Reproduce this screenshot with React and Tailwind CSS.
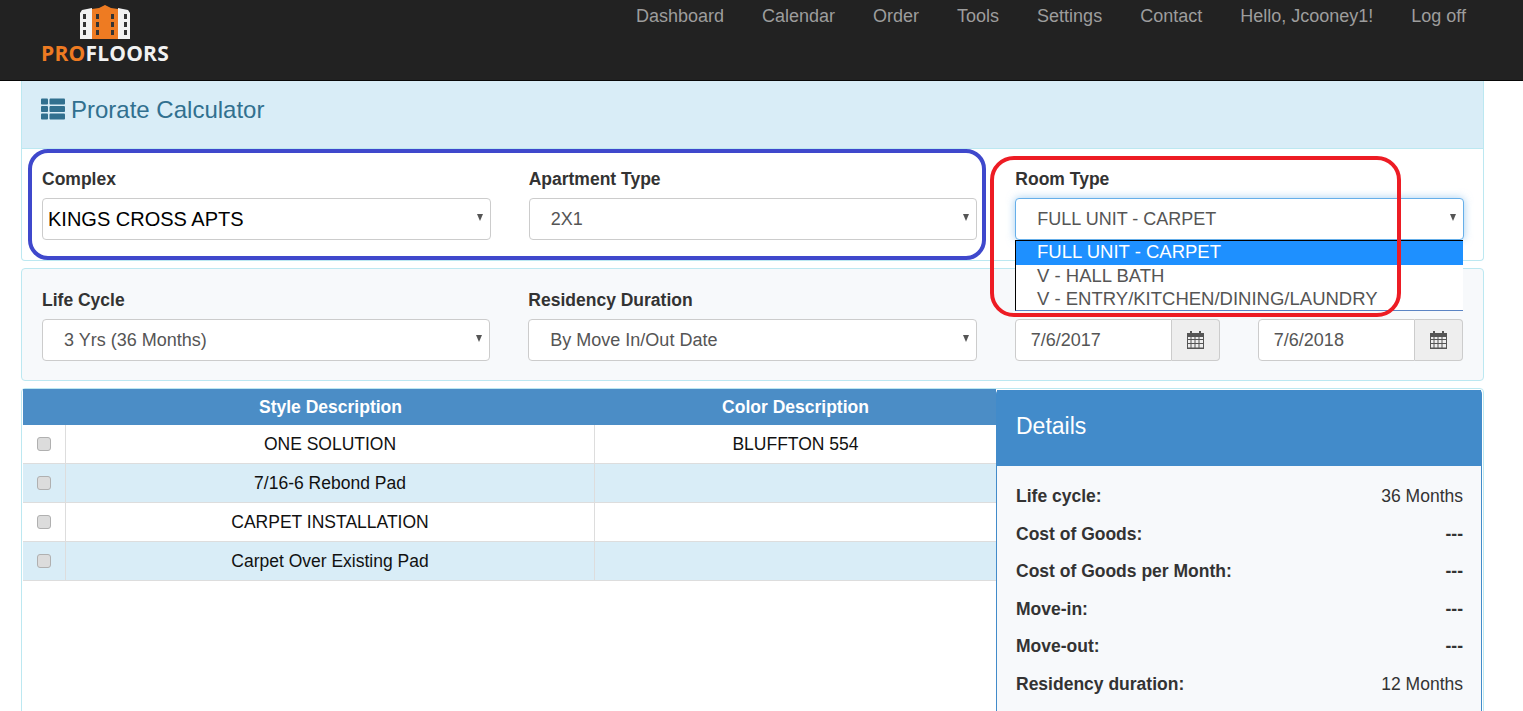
import React from 'react';
import { FaThList } from 'react-icons/fa';

const navLinks = ['Dashboard', 'Calendar', 'Order', 'Tools', 'Settings', 'Contact', 'Hello, Jcooney1!', 'Log off'];

const rows = [
    { style: 'ONE SOLUTION', color: 'BLUFFTON 554' },
    { style: '7/16-6 Rebond Pad', color: '' },
    { style: 'CARPET INSTALLATION', color: '' },
    { style: 'Carpet Over Existing Pad', color: '' },
];

const details = [
    ['Life cycle:', '36 Months'],
    ['Cost of Goods:', '---'],
    ['Cost of Goods per Month:', '---'],
    ['Move-in:', '---'],
    ['Move-out:', '---'],
    ['Residency duration:', '12 Months'],
];

const Logo = () => (
    <div className="flex flex-col items-center w-[126px] mt-[5px] ml-[42px]">
        <svg width="52" height="35" viewBox="0 0 52 35">
            <path d="M1 8 L3 5 L13 3 L13 34 L1 34 Z" fill="#f2f2f2" />
            <path d="M51 8 L49 5 L39 3 L39 34 L51 34 Z" fill="#f2f2f2" />
            <path d="M13 4 L20 3 L26 0 L32 3 L39 4 L39 34 L13 34 Z" fill="#ee7b22" />
            <g fill="#333333">
                <rect x="4" y="9" width="3" height="5" />
                <rect x="4" y="17" width="3" height="5" />
                <rect x="4" y="25" width="3" height="5" />
                <rect x="45" y="9" width="3" height="5" />
                <rect x="45" y="17" width="3" height="5" />
                <rect x="45" y="25" width="3" height="5" />
                <rect x="17" y="9" width="3" height="5" />
                <rect x="17" y="17" width="3" height="5" />
                <rect x="17" y="25" width="3" height="5" />
                <rect x="32" y="9" width="3" height="5" />
                <rect x="32" y="17" width="3" height="5" />
                <rect x="32" y="25" width="3" height="5" />
            </g>
        </svg>
        <div className="font-['Open_Sans',sans-serif] font-bold text-[21px] leading-[24px] tracking-[0.2px] whitespace-nowrap mt-[1px]">
            <span className="text-[#ee7b22]">PRO</span>
            <span className="text-[#f2f2f2]">FLOORS</span>
        </div>
    </div>
);

const CalendarIcon = () => (
    <svg width="17" height="18" viewBox="0 0 17 18" fill="#555555">
        <rect x="3" y="0" width="2" height="3" />
        <rect x="12" y="0" width="2" height="3" />
        <path d="M0 2 H17 V5 H0 Z" />
        <path
            fillRule="evenodd"
            d="M0 5 H17 V18 H0 Z M1 6 V8 H3.5 V6 Z M4.5 6 V8 H7.5 V6 Z M8.5 6 V8 H11.5 V6 Z M12.5 6 V8 H16 V6 Z M1 9 V12 H3.5 V9 Z M4.5 9 V12 H7.5 V9 Z M8.5 9 V12 H11.5 V9 Z M12.5 9 V12 H16 V9 Z M1 13 V16.5 H3.5 V13 Z M4.5 13 V16.5 H7.5 V13 Z M8.5 13 V16.5 H11.5 V13 Z M12.5 13 V16.5 H16 V13 Z"
        />
    </svg>
);

const SelectBox = ({ value, strong, focused }) => (
    <div className="relative">
        <select
            defaultValue={value}
            className={`block w-full h-[42px] appearance-none bg-white rounded-[4px] border outline-none ${
                strong ? 'pl-[5px] text-[20px] text-black' : 'pl-[21px] text-[18px] text-[#555555]'
            } ${focused ? 'border-[#66afe9] shadow-[0_0_8px_rgba(102,175,233,0.6)]' : 'border-[#cccccc]'}`}
        >
            <option>{value}</option>
        </select>
        <span className="absolute right-[8px] top-[16px] w-0 h-0 border-x-[3.5px] border-x-transparent border-t-[7px] border-t-[#555555]" />
    </div>
);

const Field = ({ label, children }) => (
    <div>
        <label className="block mb-[7px] text-[17.5px] leading-[24px] font-bold text-[#333333]">{label}</label>
        {children}
    </div>
);

const DateInput = ({ value }) => (
    <div className="flex h-[42px] flex-1">
        <input
            readOnly
            value={value}
            className="w-[157px] min-w-0 pl-[15px] bg-white border border-[#cccccc] rounded-l-[4px] text-[18px] text-[#555555] outline-none"
        />
        <span className="flex-1 flex items-center justify-center bg-[#eeeeee] border border-l-0 border-[#cccccc] rounded-r-[4px]">
            <CalendarIcon />
        </span>
    </div>
);

export default function App() {
    return (
        <div className="relative h-screen overflow-hidden bg-white font-['Liberation_Sans',Arial,sans-serif] text-[#333333]">
            <nav className="h-[81px] bg-[#222222] border-b border-[#080808] flex justify-between">
                <Logo />
                <ul className="flex gap-[38px] pt-[5px] pr-[57px] text-[18px] leading-[22px] text-[#9d9d9d]">
                    {navLinks.map((link) => (
                        <li key={link}>{link}</li>
                    ))}
                </ul>
            </nav>

            <main className="w-[1463px] ml-[21px]">
                <section className="h-[180px] border border-t-0 border-[#bce8f1] rounded-b-[4px]">
                    <div className="h-[68px] bg-[#d9edf7] border-b border-[#bce8f1] pl-[19px] pt-[14px] flex items-start gap-[6px] text-[#31708f]">
                        <FaThList className="w-[24px] h-[24px] mt-[2px]" />
                        <h1 className="text-[24px] leading-[30px]">Prorate Calculator</h1>
                    </div>
                    <div className="grid grid-cols-3 gap-[38px] pl-[20px] pr-[19px] pt-[18px]">
                        <Field label="Complex">
                            <SelectBox value="KINGS CROSS APTS" strong />
                        </Field>
                        <Field label="Apartment Type">
                            <SelectBox value="2X1" />
                        </Field>
                        <Field label="Room Type">
                            <SelectBox value="FULL UNIT - CARPET" focused />
                        </Field>
                    </div>
                </section>

                <section className="h-[113px] mt-[7px] bg-[#f7f9fb] border border-[#bce8f1] rounded-[4px] grid grid-cols-3 gap-[38px] pl-[20px] pr-[20px] pt-[19px]">
                    <Field label="Life Cycle">
                        <SelectBox value="3 Yrs (36 Months)" />
                    </Field>
                    <Field label="Residency Duration">
                        <SelectBox value="By Move In/Out Date" />
                    </Field>
                    <div className="flex gap-[38px] pt-[31px]">
                        <DateInput value="7/6/2017" />
                        <DateInput value="7/6/2018" />
                    </div>
                </section>

                <section className="h-[340px] mt-[7px] border border-[#bce8f1] rounded-[4px] flex">
                    <div className="w-[973px] ml-[1px]">
                        <div className="flex h-[36px] bg-[#4b8dc6] text-white font-bold text-[17.5px] leading-[36px] text-center">
                            <div className="w-[43px]" />
                            <div className="w-[529px]">Style Description</div>
                            <div className="flex-1">Color Description</div>
                        </div>
                        {rows.map((row, i) => (
                            <div
                                key={row.style}
                                className={`flex h-[39px] border-b border-[#dddddd] text-[17.5px] text-[#111111] text-center leading-[38px] ${
                                    i % 2 ? 'bg-[#d9edf7]' : 'bg-white'
                                }`}
                            >
                                <div className="w-[43px] flex items-center justify-center pr-[1px] pb-[1px] border-r border-[#dddddd]">
                                    <input
                                        type="checkbox"
                                        className="appearance-none w-[14px] h-[14px] rounded-[3px] bg-[#dcdcdc] border border-[#b0b0b0]"
                                    />
                                </div>
                                <div className="w-[529px] border-r border-[#dddddd]">{row.style}</div>
                                <div className="flex-1">{row.color}</div>
                            </div>
                        ))}
                    </div>

                    <aside className="w-[486px] mt-[1px] border border-t-0 border-[#428bca] rounded-t-[4px] bg-[#f7f9fb]">
                        <div className="h-[76px] bg-[#428bca] pl-[19px] pt-[21px] text-white text-[23px] leading-[30px]">
                            Details
                        </div>
                        <div className="pl-[19px] pr-[18px] pt-[12px]">
                            {details.map(([label, value]) => (
                                <div key={label} className="flex justify-between h-[37.5px] text-[17.5px] leading-[37px]">
                                    <span className="font-bold">{label}</span>
                                    <span className={value === '---' ? 'font-bold' : ''}>{value}</span>
                                </div>
                            ))}
                        </div>
                    </aside>
                </section>
            </main>

            {/* open options list of the Room Type select */}
            <ul className="absolute left-[1015px] top-[240px] w-[448px] h-[71px] bg-white border-t border-l border-black border-b-[#5b84c4] text-[18.5px] leading-[22.5px] text-[#555555] border-b">
                <li className="bg-[#1e90ff] text-white pl-[21px] h-[24px]">FULL UNIT - CARPET</li>
                <li className="pl-[21px]">V - HALL BATH</li>
                <li className="pl-[21px]">V - ENTRY/KITCHEN/DINING/LAUNDRY</li>
            </ul>

            {/* hand drawn markup on top of the screenshot */}
            <div className="absolute left-[28px] top-[149px] w-[958px] h-[111px] border-[4px] border-[#3f48cc] rounded-[20px]" />
            <div className="absolute left-[990px] top-[156px] w-[411px] h-[161px] border-[4px] border-[#ed1c24] rounded-[24px]" />
        </div>
    );
}
